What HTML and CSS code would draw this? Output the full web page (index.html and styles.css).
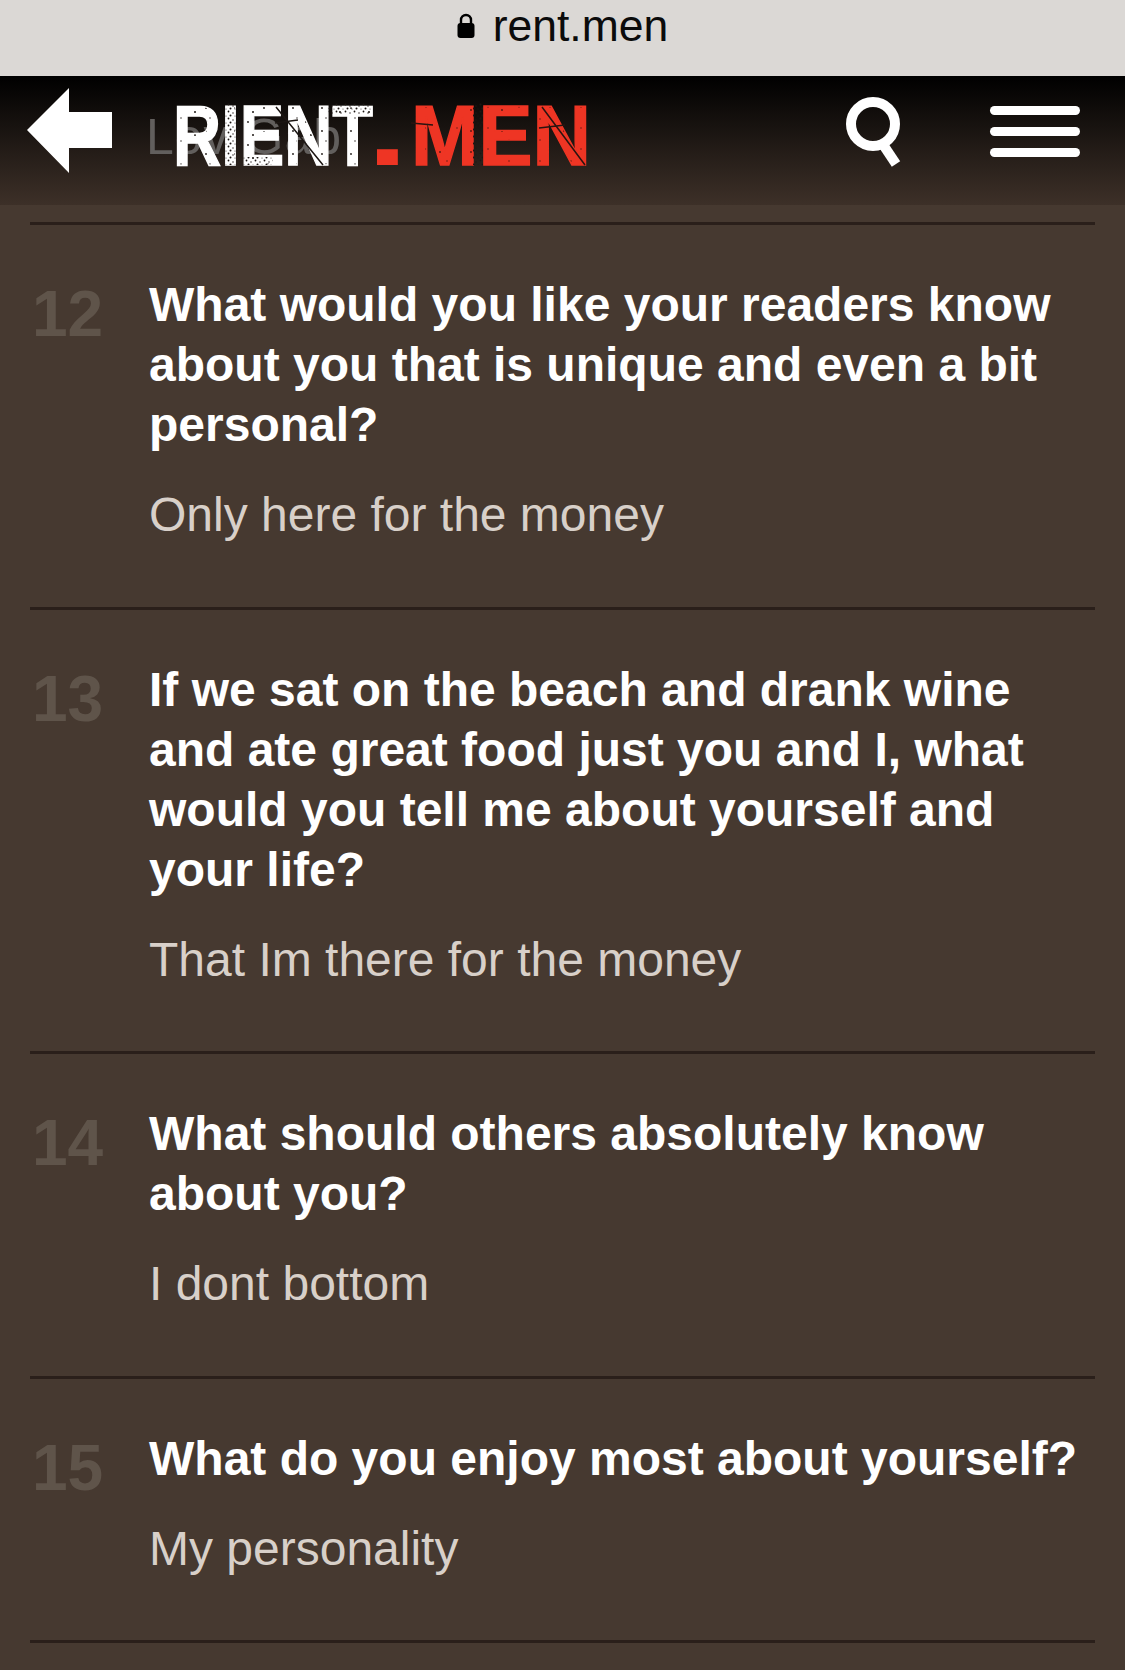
FILE: index.html
```html
<!DOCTYPE html>
<html lang="en">
<head>
  <meta charset="UTF-8">
  <title>rent.men</title>
  <link rel="stylesheet" href="styles.css">
</head>
<body>
  <div class="url-bar">
    <svg class="lock" width="18" height="25" viewBox="0 0 18 25">
      <path d="M4 11V7a5 5 0 0 1 10 0v4" fill="none" stroke="#000" stroke-width="2.4"/>
      <rect x="0.5" y="10" width="17" height="15" rx="3" fill="#000"/>
    </svg>
    <span>rent.men</span>
  </div>

  <header class="top">
    <svg class="back" width="85" height="85" viewBox="0 0 85 85">
      <path d="M0 42 42 0V24H85V60H42V85Z" fill="#fff"/>
    </svg>
    <div class="logo-wrap">
      <span class="ghost">Lov Gab</span>
      <svg class="logo" width="414" height="63" viewBox="0 0 414 63">
        <defs>
          <pattern id="speck-white" width="29" height="23" patternUnits="userSpaceOnUse">
            <rect width="29" height="23" fill="#fff"/>
            <g fill="#1c1613">
              <circle cx="4" cy="5" r=".9"/>
              <circle cx="22" cy="9" r="1"/>
              <circle cx="8" cy="15" r=".7"/>
              <circle cx="17" cy="19" r=".9"/>
            </g>
          </pattern>
          <pattern id="speck-red" width="31" height="21" patternUnits="userSpaceOnUse">
            <rect width="31" height="21" fill="#ee3524"/>
            <g fill="#4e1710">
              <circle cx="5" cy="4" r=".7"/>
              <circle cx="19" cy="7" r=".9"/>
              <circle cx="26" cy="16" r=".7"/>
            </g>
          </pattern>
          <pattern id="dust" width="9" height="7" patternUnits="userSpaceOnUse">
            <g fill="#1c1613">
              <circle cx="1.5" cy="1.5" r=".9"/>
              <circle cx="6" cy="3" r=".7"/>
              <circle cx="3.5" cy="5.5" r="1"/>
              <circle cx="8" cy="6" r=".5"/>
            </g>
          </pattern>
        </defs>
        <text class="logo-text logo-white" x="0" y="62" textLength="200" lengthAdjust="spacingAndGlyphs">RIENT</text>
        <text class="logo-text logo-dot" x="194" y="62" textLength="41" lengthAdjust="spacingAndGlyphs">.</text>
        <text class="logo-text logo-red" x="238" y="62" textLength="180" lengthAdjust="spacingAndGlyphs">MEN</text>
        <rect x="52" y="0" width="11" height="62" fill="url(#dust)"/>
        <rect x="155" y="0" width="43" height="11" fill="url(#dust)"/>
        <rect x="300" y="0" width="10" height="62" fill="url(#dust)"/>
        <rect x="70" y="54" width="30" height="8" fill="url(#dust)"/>
        <path d="M103 4 150 62M102 20 125 17" stroke="#1c1613" stroke-width="1.5" fill="none"/>
        <path d="M238 20 260 22M366 25 392 22M369 4 412 62" stroke="#2a1410" stroke-width="1.5" fill="none"/>
      </svg>
    </div>
    <svg class="search" width="57" height="71" viewBox="0 0 57 71">
      <circle cx="27" cy="27" r="22" fill="none" stroke="#fff" stroke-width="10"/>
      <path d="M38 49 50 67" fill="none" stroke="#fff" stroke-width="10"/>
    </svg>
    <div class="burger">
      <i></i><i></i><i></i>
    </div>
  </header>

  <main class="list">
    <section class="row">
      <div class="num">12</div>
      <div>
        <h3>What would you like your readers know about you that is unique and even a bit personal?</h3>
        <p>Only here for the money</p>
      </div>
    </section>
    <section class="row">
      <div class="num">13</div>
      <div>
        <h3>If we sat on the beach and drank wine and ate great food just you and I, what would you tell me about yourself and your life?</h3>
        <p>That Im there for the money</p>
      </div>
    </section>
    <section class="row">
      <div class="num">14</div>
      <div>
        <h3>What should others absolutely know about you?</h3>
        <p>I dont bottom</p>
      </div>
    </section>
    <section class="row">
      <div class="num">15</div>
      <div>
        <h3>What do you enjoy most about yourself?</h3>
        <p>My personality</p>
      </div>
    </section>
    <div class="list-end"></div>
  </main>
</body>
</html>
```

FILE: styles.css
```css
* {
  box-sizing: border-box;
  margin: 0;
  padding: 0;
}

html, body {
  height: 1670px;
  overflow: hidden;
}

body {
  background: #463930;
  font-family: "Liberation Sans", Arial, sans-serif;
}

.url-bar {
  height: 76px;
  background: #dbd8d5;
  display: flex;
  justify-content: center;
  align-items: flex-start;
  gap: 18px;
  color: #0b0b0b;
  font-size: 44.5px;
  line-height: 52px;
}

.lock {
  margin-top: 13px;
}

.top {
  height: 129px;
  background: linear-gradient(#000, #3d3028);
  display: flex;
  align-items: flex-start;
  padding: 12px 45px 0 27px;
}

.back {
  flex: none;
}

.logo-wrap {
  position: relative;
  margin: 15px 0 0 61px;
  width: 414px;
  height: 63px;
}

.ghost {
  position: absolute;
  left: -27px;
  top: 5px;
  font-size: 50px;
  line-height: 58px;
  letter-spacing: 1px;
  color: #625f5d;
  white-space: nowrap;
}

.logo {
  position: relative;
  display: block;
  overflow: visible;
}

.logo-text {
  font-family: "Liberation Sans", Arial, sans-serif;
  font-size: 86px;
  font-weight: 700;
  stroke-width: 1.5px;
}

.logo-white {
  fill: url(#speck-white);
  stroke: #fff;
}

.logo-red {
  fill: url(#speck-red);
  stroke: #ee3524;
}

.logo-dot {
  font-size: 105px;
  fill: #ee3524;
}

.search {
  flex: none;
  margin: 9px 0 0 259px;
}

.burger {
  flex: none;
  width: 90px;
  margin: 18px 0 0 87px;
  display: flex;
  flex-direction: column;
  gap: 12px;
}

.burger i {
  display: block;
  height: 9px;
  border-radius: 5px;
  background: #fff;
}

.list {
  padding: 17px 30px 0;
}

.row {
  display: grid;
  grid-template-columns: 119px 1fr;
  border-top: 3px solid #2a1f1a;
  padding: 50px 0 61.5px;
}

.list-end {
  border-top: 3px solid #2a1f1a;
}

.num {
  font-size: 64px;
  line-height: 60px;
  font-weight: 700;
  color: #5f544a;
  padding: 9px 0 0 2px;
}

h3 {
  font-size: 48px;
  line-height: 60px;
  font-weight: 700;
  color: #fff;
}

p {
  margin-top: 30px;
  font-size: 48px;
  line-height: 60px;
  color: #d8d0c9;
}
```
